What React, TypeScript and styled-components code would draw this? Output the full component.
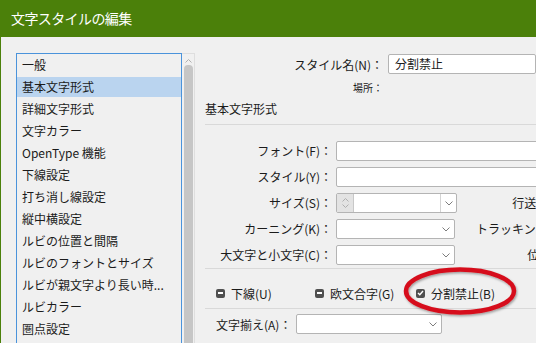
import React from "react";
import styled, { createGlobalStyle } from "styled-components";

const FONT = `"Noto Sans CJK JP", "Noto Sans", "DejaVu Sans", sans-serif`;

const GlobalStyle = createGlobalStyle`
  html, body { margin: 0; padding: 0; background: #f0f0f0; }
  body { font-family: ${FONT}; }
  * { box-sizing: border-box; }
`;

const Window = styled.div`
  position: relative;
  width: 536px;
  height: 343px;
  overflow: hidden;
  background: #f0f0f0;
  border-left: 1px solid #4b800a;
  display: flex;
  flex-direction: column;
  font-family: ${FONT};
  font-size: 12px;
  color: #1b1b1b;
`;

const TitleBar = styled.div`
  flex: none;
  height: 37px;
  background: #4b800a;
  color: #ffffff;
  display: flex;
  align-items: center;
  padding: 0 0 1px 10px;
  font-size: 14px;
  letter-spacing: -0.6px;
`;

const Body = styled.div`
  flex: 1;
  min-height: 0;
  display: flex;
  gap: 10px;
  padding: 16px 0 0 15px;
`;

const ListWrap = styled.div`
  flex: none;
  display: flex;
  height: 320px;
`;

const List = styled.ul`
  list-style: none;
  margin: 0;
  padding: 1px 0 0;
  width: 166px;
  border: 1px solid #4a93db;
  background: #f0f0f0;
`;

const ListItem = styled.li<{ $selected?: boolean }>`
  height: 20px;
  margin: 0 0 2px;
  padding-left: 5px;
  line-height: 20px;
  white-space: nowrap;
  background: ${(p) => (p.$selected ? "#bad4ef" : "transparent")};
`;

const Scrollbar = styled.div`
  width: 13px;
  border: 1px solid #dedede;
  border-left: none;
  background: #f0f0f0;
  display: flex;
  flex-direction: column;
  align-items: center;
`;

const ScrollArrow = styled.div`
  height: 11px;
  display: flex;
  align-items: center;
  justify-content: center;
  padding-top: 2px;
`;

const Thumb = styled.div`
  flex: 1;
  width: 9px;
  background: #c6c6c6;
  border-radius: 4px 4px 0 0;
`;

const Right = styled.div`
  flex: 1;
  min-width: 0;
  display: flex;
  flex-direction: column;
`;

const NameRow = styled.div`
  display: flex;
  align-items: center;
  gap: 5px;
  height: 20px;
  margin-top: 1px;
`;

const RightLabel = styled.div<{ $w: number; $size?: number }>`
  flex: none;
  width: ${(p) => p.$w}px;
  text-align: right;
  white-space: nowrap;
  font-size: ${(p) => p.$size ?? 12}px;
`;

const LocationRow = styled.div`
  display: flex;
  height: 14px;
  line-height: 14px;
  margin-top: 7px;
`;

const Heading = styled.div`
  margin-top: 6px;
  line-height: 16px;
  font-size: 12px;
`;

const Divider = styled.div<{ $mt: number }>`
  flex: none;
  height: 1px;
  width: 400px;
  background: #d9d9d9;
  margin-top: ${(p) => p.$mt}px;
`;

const FormGrid = styled.div`
  margin-top: 16px;
  display: grid;
  grid-template-columns: 127px 120px 115px;
  grid-auto-rows: 20px;
  column-gap: 4px;
  row-gap: 6px;
  align-items: center;
`;

const GridLabel = styled.div`
  text-align: right;
  white-space: nowrap;
  line-height: 20px;
`;

const Combo = styled.div<{ $w: number; $span?: boolean }>`
  width: ${(p) => p.$w}px;
  height: 20px;
  display: flex;
  background: #ffffff;
  border: 1px solid #b4b4b4;
  border-radius: 2px;
  overflow: hidden;
  ${(p) => (p.$span ? "grid-column: 2 / span 2;" : "")}
`;

const Spin = styled.div`
  flex: none;
  width: 17px;
  background: #e3e3e3;
  border-right: 1px solid #c8c8c8;
  display: flex;
  flex-direction: column;
  align-items: center;
  justify-content: center;
  gap: 2px;
`;

const Field = styled.div`
  flex: 1;
  padding-left: 6px;
  line-height: 18px;
  white-space: nowrap;
  font-size: 12px;
`;

const ArrowBox = styled.div<{ $sep?: boolean }>`
  flex: none;
  width: 16px;
  display: flex;
  align-items: center;
  justify-content: center;
  border-left: ${(p) => (p.$sep ? "1px solid #d4d4d4" : "none")};
`;

const CheckRow = styled.div`
  display: flex;
  align-items: center;
  height: 20px;
  margin-top: 14px;
  padding-left: 11px;
`;

const CheckItem = styled.div<{ $w: number }>`
  flex: none;
  width: ${(p) => p.$w}px;
  display: flex;
  align-items: center;
  gap: 6px;
  white-space: nowrap;
`;

const Box = styled.span`
  flex: none;
  width: 9px;
  height: 9px;
  border-radius: 2px;
  background: #505050;
  display: flex;
  align-items: center;
  justify-content: center;
`;

const Dash = styled.span`
  width: 5px;
  height: 2px;
  background: #ffffff;
`;

const AlignRow = styled.div`
  display: flex;
  align-items: center;
  gap: 5px;
  height: 20px;
  margin-top: 5px;
  padding-left: 11px;
`;

const Overlay = styled.svg`
  position: absolute;
  left: 0;
  top: 0;
  pointer-events: none;
`;

const Chevron = ({ up }: { up?: boolean }) => (
  <svg width="8" height="5" viewBox="0 0 8 5">
    <path
      d={up ? "M0.5 4.5 L4 1 L7.5 4.5" : "M0.5 0.5 L4 4 L7.5 0.5"}
      fill="none"
      stroke="#7d7d7d"
      strokeWidth="1"
    />
  </svg>
);

const SmallChevron = ({ up }: { up?: boolean }) => (
  <svg width="7" height="4" viewBox="0 0 7 4">
    <path
      d={up ? "M0.5 3.5 L3.5 0.5 L6.5 3.5" : "M0.5 0.5 L3.5 3.5 L6.5 0.5"}
      fill="none"
      stroke="#b0b0b0"
      strokeWidth="1"
    />
  </svg>
);

const Check = () => (
  <svg width="7" height="6" viewBox="0 0 7 6">
    <path d="M1 3 L2.8 4.8 L6 1" fill="none" stroke="#ffffff" strokeWidth="1.4" />
  </svg>
);

const items = [
  "一般",
  "基本文字形式",
  "詳細文字形式",
  "文字カラー",
  "OpenType 機能",
  "下線設定",
  "打ち消し線設定",
  "縦中横設定",
  "ルビの位置と間隔",
  "ルビのフォントとサイズ",
  "ルビが親文字より長い時...",
  "ルビカラー",
  "圏点設定",
];

export default function App() {
  return (
    <>
      <GlobalStyle />
      <Window>
        <TitleBar>文字スタイルの編集</TitleBar>
        <Body>
          <ListWrap>
            <List>
              {items.map((t, i) => (
                <ListItem key={t} $selected={i === 1}>
                  {t}
                </ListItem>
              ))}
            </List>
            <Scrollbar>
              <ScrollArrow>
                <SmallChevron up />
              </ScrollArrow>
              <Thumb />
            </Scrollbar>
          </ListWrap>
          <Right>
            <NameRow>
              <RightLabel $w={178}>スタイル名(N)：</RightLabel>
              <Combo $w={200}>
                <Field>分割禁止</Field>
              </Combo>
            </NameRow>
            <LocationRow>
              <RightLabel $w={178} $size={10}>
                場所：
              </RightLabel>
            </LocationRow>
            <Heading>基本文字形式</Heading>
            <Divider $mt={7} />
            <FormGrid>
              <GridLabel>フォント(F)：</GridLabel>
              <Combo $w={240} $span>
                <Field />
                <ArrowBox $sep>
                  <Chevron />
                </ArrowBox>
              </Combo>
              <GridLabel>スタイル(Y)：</GridLabel>
              <Combo $w={240} $span>
                <Field />
                <ArrowBox $sep>
                  <Chevron />
                </ArrowBox>
              </Combo>
              <GridLabel>サイズ(S)：</GridLabel>
              <Combo $w={121}>
                <Spin>
                  <SmallChevron up />
                  <SmallChevron />
                </Spin>
                <Field />
                <ArrowBox $sep>
                  <Chevron />
                </ArrowBox>
              </Combo>
              <GridLabel>行送り(L)：</GridLabel>
              <GridLabel>カーニング(K)：</GridLabel>
              <Combo $w={119}>
                <Field />
                <ArrowBox>
                  <Chevron />
                </ArrowBox>
              </Combo>
              <GridLabel>トラッキング(T)：</GridLabel>
              <GridLabel>大文字と小文字(C)：</GridLabel>
              <Combo $w={119}>
                <Field />
                <ArrowBox>
                  <Chevron />
                </ArrowBox>
              </Combo>
              <GridLabel>位置(I)：</GridLabel>
            </FormGrid>
            <Divider $mt={3} />
            <CheckRow>
              <CheckItem $w={99}>
                <Box>
                  <Dash />
                </Box>
                下線(U)
              </CheckItem>
              <CheckItem $w={101}>
                <Box>
                  <Dash />
                </Box>
                欧文合字(G)
              </CheckItem>
              <CheckItem $w={110}>
                <Box>
                  <Check />
                </Box>
                分割禁止(B)
              </CheckItem>
            </CheckRow>
            <Divider $mt={5} />
            <AlignRow>
              <span>文字揃え(A)：</span>
              <Combo $w={146}>
                <Field />
                <ArrowBox>
                  <Chevron />
                </ArrowBox>
              </Combo>
            </AlignRow>
          </Right>
        </Body>
        <Overlay width="536" height="343" viewBox="0 0 536 343">
          <defs>
            <filter id="sh" x="-10%" y="-20%" width="120%" height="140%">
              <feDropShadow dx="1" dy="1.5" stdDeviation="1" floodColor="#000" floodOpacity="0.35" />
            </filter>
          </defs>
          <ellipse
            cx="459"
            cy="291"
            rx="54"
            ry="21.5"
            fill="none"
            stroke="#d6111c"
            strokeWidth="4.5"
            filter="url(#sh)"
          />
        </Overlay>
      </Window>
    </>
  );
}
